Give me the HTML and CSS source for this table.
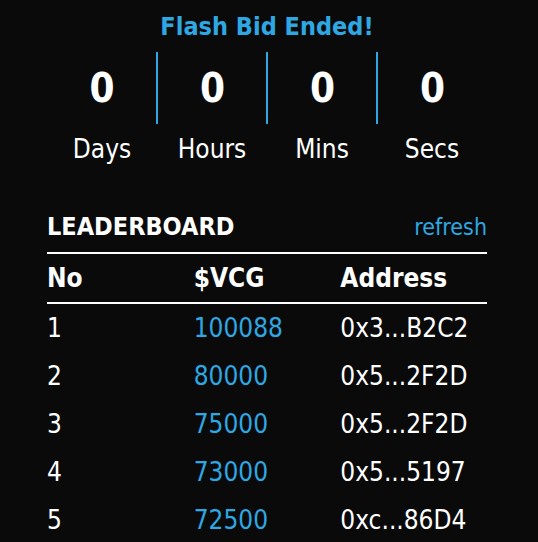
FILE: index.html
```html
<!DOCTYPE html>
<html>
<head>
<meta charset="utf-8">
<link rel="stylesheet" href="styles.css">
</head>
<body>
<div class="wrap">
  <h1 class="title">Flash Bid Ended!</h1>
  <div class="countdown">
    <div class="num">0</div>
    <div class="num div">0</div>
    <div class="num div">0</div>
    <div class="num div">0</div>
    <div class="lbl">Days</div>
    <div class="lbl">Hours</div>
    <div class="lbl">Mins</div>
    <div class="lbl">Secs</div>
  </div>
  <div class="lb-head">
    <span class="lb-title">LEADERBOARD</span>
    <span class="refresh">refresh</span>
  </div>
  <div class="table">
    <div class="row head"><span>No</span><span>$VCG</span><span>Address</span></div>
    <div class="row"><span>1</span><span class="amt">100088</span><span>0x3...B2C2</span></div>
    <div class="row"><span>2</span><span class="amt">80000</span><span>0x5...2F2D</span></div>
    <div class="row"><span>3</span><span class="amt">75000</span><span>0x5...2F2D</span></div>
    <div class="row"><span>4</span><span class="amt">73000</span><span>0x5...5197</span></div>
    <div class="row"><span>5</span><span class="amt">72500</span><span>0xc...86D4</span></div>
  </div>
</div>
</body>
</html>
```
FILE: styles.css
```css
html, body {
  margin: 0;
  padding: 0;
  background: #0a0a0a;
  color: #ffffff;
  font-family: "DejaVu Sans Condensed", "DejaVu Sans", Roboto, sans-serif;
  font-stretch: condensed;
}
.wrap {
  width: 440px;
  margin-left: 47px;
}
.title {
  margin: 0;
  padding-top: 12px;
  height: 30px;
  line-height: 30px;
  font-size: 25px;
  font-weight: 700;
  text-align: center;
  color: #2ea7e2;
}
.countdown {
  display: grid;
  grid-template-columns: repeat(4, 1fr);
  margin-top: 10px;
}
.num {
  height: 72px;
  line-height: 72px;
  font-size: 40px;
  font-weight: 700;
  text-align: center;
}
.num.div {
  border-left: 2px solid #2ea7e2;
  margin-left: -1px;
}
.lbl {
  text-align: center;
  font-size: 26px;
  line-height: 50px;
}
.lb-head {
  display: flex;
  justify-content: space-between;
  align-items: baseline;
  margin-top: 38px;
  line-height: 30px;
  border-bottom: 2px solid #ffffff;
  padding-bottom: 10px;
}
.lb-title {
  font-size: 25px;
  font-weight: 700;
}
.refresh {
  font-size: 23px;
  color: #2ea7e2;
}
.row {
  display: grid;
  grid-template-columns: repeat(3, 1fr);
  height: 48px;
  line-height: 48px;
  font-size: 26px;
}
.row.head {
  font-weight: 700;
  border-bottom: 2px solid #ffffff;
}
.amt {
  color: #2ea7e2;
}
```
